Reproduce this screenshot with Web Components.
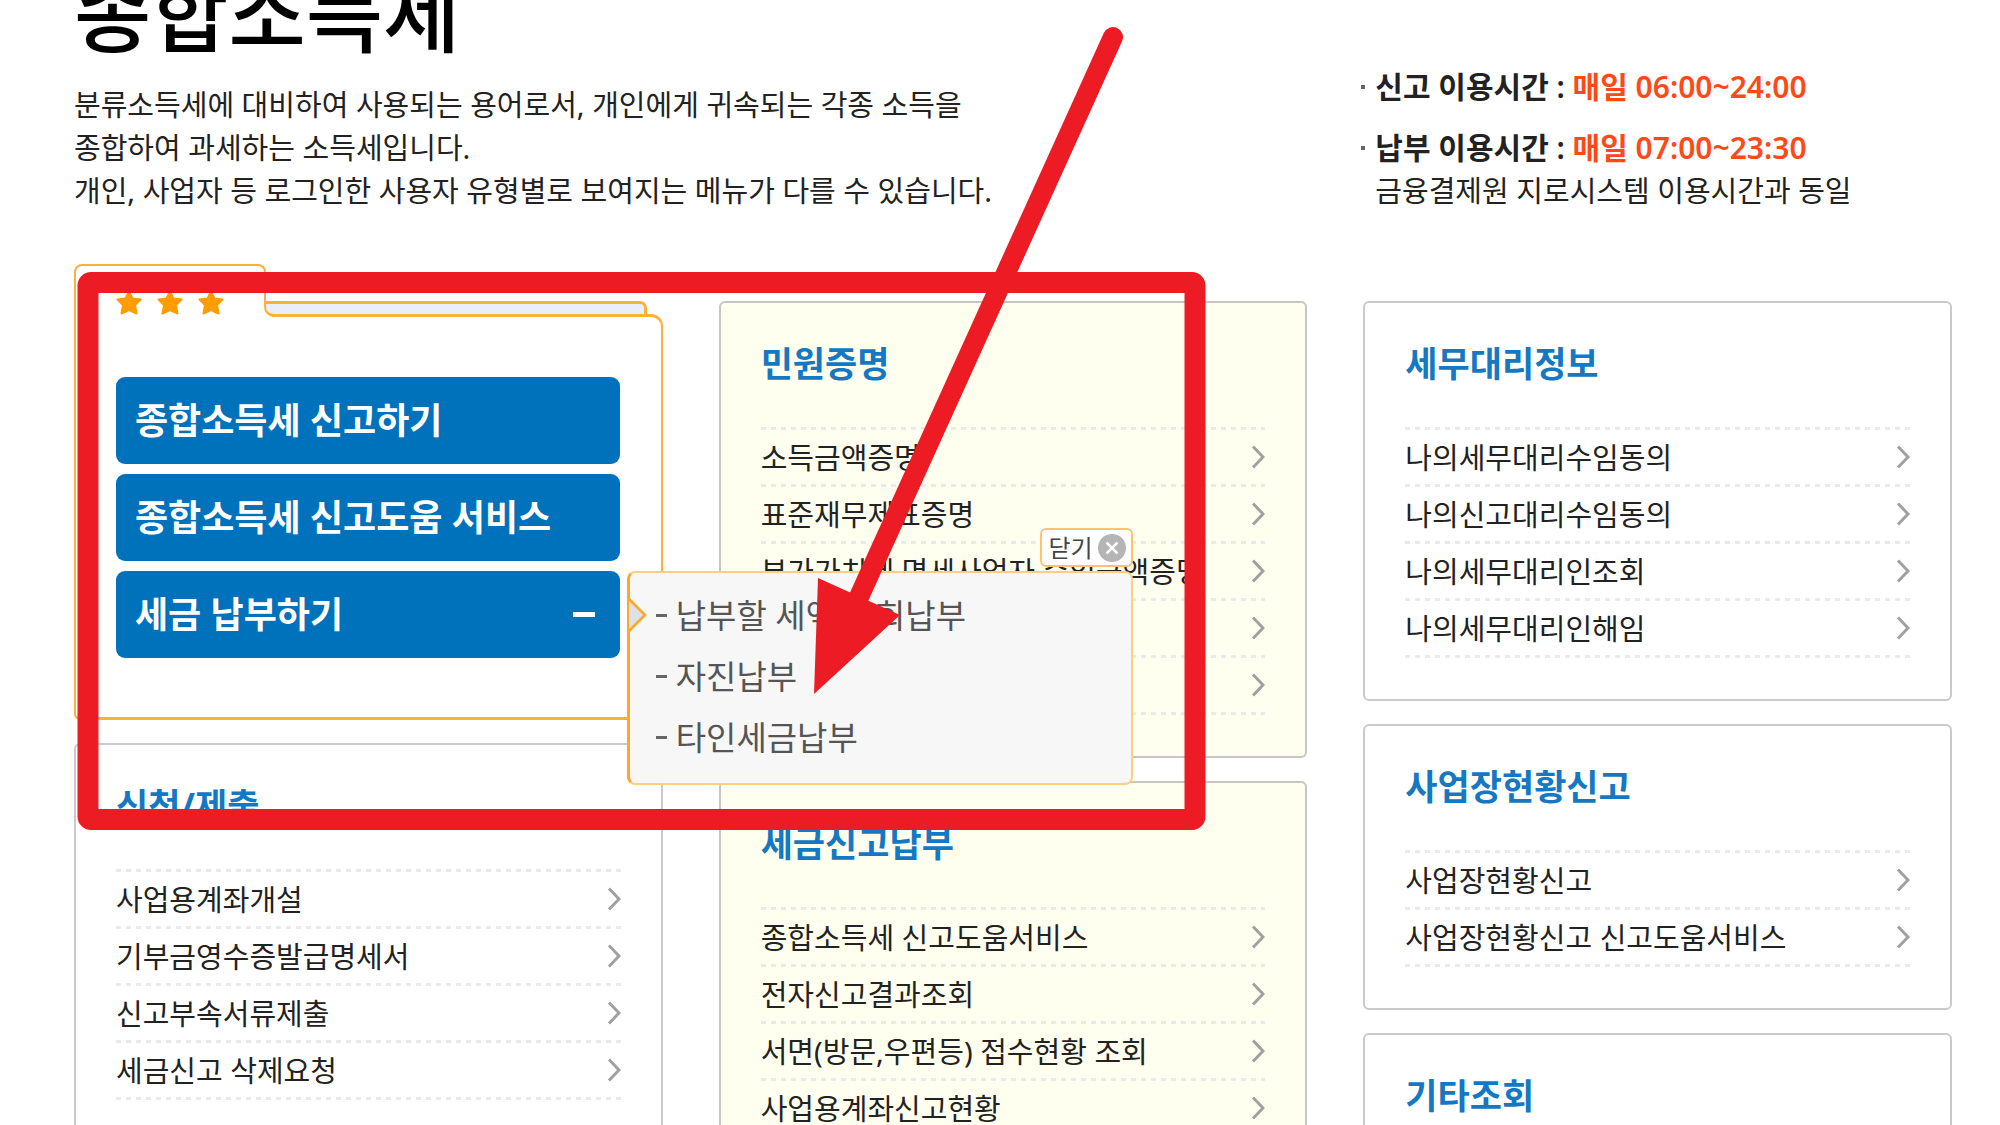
<!DOCTYPE html>
<html lang="ko">
<head>
<meta charset="utf-8">
<title>종합소득세</title>
<style>
  body { margin: 0; height: 100vh; overflow: hidden; background: #fff; color: #222;
    font-family: "Noto Sans", "Noto Sans CJK KR", sans-serif; font-size: 29px; line-height: 43px; }
</style>
</head>
<body>
<tax-page></tax-page>
<script>
const define = (name, html) => {
  const t = document.createElement('template');
  t.innerHTML = html;
  customElements.define(name, class extends HTMLElement {
    connectedCallback() {
      if (this.shadowRoot) return;
      this.attachShadow({ mode: 'open' }).append(t.content.cloneNode(true));
    }
  });
};

define('page-intro', `
<style>
  :host { display: block; }
  h1 { margin: -28px 0 27px; font-size: 84px; line-height: 84px; font-weight: 500; color: #000; }
  p { margin: 0; }
</style>
<h1><slot name="title"></slot></h1>
<p><slot></slot></p>`);

define('service-hours', `
<style>
  :host { display: block; padding-top: 65px; }
  ul { list-style: none; margin: 0; padding: 0; display: flex; flex-direction: column; gap: 18px; }
  li { display: flex; gap: 10px; align-items: flex-start; }
  li::before { content: ""; flex: none; width: 4px; height: 4px; margin-top: 20px; background: #666; }
  b { display: block; font-weight: 600; font-size: 30px; }
  em { font-style: normal; color: #ff4a17; }
  small { display: block; font-size: inherit; }
</style>
<ul>
  <li><div><b>신고 이용시간 : <em>매일 06:00~24:00</em></b></div></li>
  <li><div><b>납부 이용시간 : <em>매일 07:00~23:30</em></b><small>금융결제원 지로시스템 이용시간과 동일</small></div></li>
</ul>`);

define('menu-card', `
<style>
  :host { display: block; box-sizing: border-box; border: 2px solid #cacaca; border-radius: 6px; padding: 38px 40px 41px; background: #fff; }
  :host([tone="cream"]) { background: #fffff0; border-color: #c6c6c0; }
  h2 { margin: 0; font-size: 35px; line-height: 46px; font-weight: 700; color: #1478c2; }
  ul { list-style: none; margin: 40px 0 0; padding: 0; }
  ul::before { content: ""; display: block; height: 3px; background: repeating-linear-gradient(90deg, #eaeaea 0 5px, transparent 5px 10px); }
</style>
<h2><slot name="title"></slot></h2>
<ul><slot></slot></ul>`);

define('menu-row', `
<style>
  :host { display: block; }
  a { display: flex; align-items: center; justify-content: space-between; height: 54px; color: inherit; text-decoration: none; white-space: nowrap; }
  svg { flex: none; width: 14px; height: 24px; }
  i { display: block; height: 3px; background: repeating-linear-gradient(90deg, #eaeaea 0 5px, transparent 5px 10px); }
</style>
<a href="#"><span><slot></slot></span>
<svg viewBox="0 0 14 24" fill="none" stroke="#a0a0a0" stroke-width="3"><path d="M2 1.500 12 12 2 22.500"/></svg></a><i></i>`);

define('action-button', `
<style>
  :host { display: block; }
  button { display: flex; align-items: center; justify-content: space-between; width: 100%; height: 87px; margin: 0; border: 0; border-radius: 9px;
    padding: 0 25px 0 19px; background: #0072bc; color: #fff; font: 700 36px/46px "Noto Sans", "Noto Sans CJK KR", sans-serif; }
  i { display: none; width: 22px; height: 5px; background: #fff; }
  :host([open]) i { display: block; }
</style>
<button type="button"><span><slot></slot></span><i></i></button>`);

define('pay-popup', `
<style>
  :host { display: block; box-sizing: border-box; width: 506px; padding: 12px 26px 15px; border: 2px solid #ffce80; border-left: 3px solid #ffa726; border-radius: 8px; background: #f7f7f8; color: #555; }
  ul { list-style: none; margin: 0; padding: 0; font-size: 33px; line-height: 61px; }
  li { display: flex; align-items: center; gap: 9px; }
  li::before { content: ""; width: 11px; height: 3px; background: #666; }
  a { color: inherit; text-decoration: none; }
  .notch { position: absolute; left: -3px; top: 24px; width: 20px; height: 36px; }
  button { position: absolute; right: -2px; top: -45px; display: flex; align-items: center; gap: 5px; height: 39px; margin: 0; padding: 0 5px 0 6px;
    border: 2px solid #ffc46a; border-radius: 6px; background: #fff; color: #444; font: 24px/30px "Noto Sans", "Noto Sans CJK KR", sans-serif; }
  button svg { width: 28px; height: 28px; }
</style>
<button type="button">닫기<svg viewBox="0 0 28 28"><circle cx="14" cy="14" r="14" fill="#b5b5b5"/><path d="M8.500 8.500 19.500 19.500M19.500 8.500 8.500 19.500" stroke="#fff" stroke-width="2.500"/></svg></button>
<svg class="notch" viewBox="0 0 20 36"><path d="M2 2 18 18 2 34Z" fill="#dde0e6"/><path d="M2 2 18 18 2 34" fill="none" stroke="#ffa726" stroke-width="2.500"/></svg>
<ul>
  <li><a href="#">납부할 세액 조회납부</a></li>
  <li><a href="#">자진납부</a></li>
  <li><a href="#">타인세금납부</a></li>
</ul>`);

define('folder-card', `
<style>
  :host { display: block; --edge: #ffb03b; }
  .tab { position: relative; z-index: 3; box-sizing: border-box; width: 192px; height: 37px; padding: 24px 0 0 40px; display: flex; gap: 15px;
    border: 2px solid var(--edge); border-bottom: 0; border-radius: 8px 8px 0 0; }
  .tab svg { flex: none; width: 26px; height: 25px; fill: #ff9c00; stroke: #ff9c00; stroke-width: 2; stroke-linejoin: round; }
  .neck { display: flex; height: 16px; padding-right: 16px; }
  .fill { position: relative; z-index: 1; box-sizing: border-box; width: 198px; border-left: 2px solid var(--edge); background: #fff; }
  .strip { position: relative; z-index: 2; flex: 1; box-sizing: border-box; margin-left: -8px; border: 3px solid var(--edge); border-left-width: 2px; border-radius: 0 7px 0 10px; background: #e8eefa; }
  .body { box-sizing: border-box; margin-top: -3px; border: 2px solid var(--edge); border-top-width: 3px; border-bottom-width: 3px; border-radius: 0 12px 6px 6px; padding: 60px 41px 59px 40px; display: flex; flex-direction: column; gap: 10px; }
  .anchor { position: relative; }
  pay-popup { position: absolute; z-index: 5; left: calc(100% + 7px); top: 0; }
</style>
<div class="tab">
  <svg viewBox="0 0 26 25"><path d="M13 1.500 16.500 8.500 24.500 9.500 19 15 20.500 23.500 13 20 5.500 23.500 7 15 1.500 9.500 9.500 8.500Z"/></svg>
  <svg viewBox="0 0 26 25"><path d="M13 1.500 16.500 8.500 24.500 9.500 19 15 20.500 23.500 13 20 5.500 23.500 7 15 1.500 9.500 9.500 8.500Z"/></svg>
  <svg viewBox="0 0 26 25"><path d="M13 1.500 16.500 8.500 24.500 9.500 19 15 20.500 23.500 13 20 5.500 23.500 7 15 1.500 9.500 9.500 8.500Z"/></svg>
</div>
<div class="neck"><div class="fill"></div><div class="strip"></div></div>
<div class="body">
  <action-button>종합소득세 신고하기</action-button>
  <action-button>종합소득세 신고도움 서비스</action-button>
  <div class="anchor"><action-button open>세금 납부하기</action-button><pay-popup></pay-popup></div>
</div>`);

define('marker-overlay', `
<style>
  :host { position: absolute; z-index: 10; left: 0; top: 0; pointer-events: none; }
  svg { display: block; width: 1300px; height: 900px; }
</style>
<svg viewBox="0 0 1300 900" fill="none" stroke="#ed1c24" stroke-width="20">
  <rect x="88" y="282.500" width="1107" height="537" rx="3" stroke-width="21"/>
  <path d="M1113 37 859 597" stroke-linecap="round"/>
  <path d="M818 578 814 694 900 615Z" fill="#ed1c24" stroke="none"/>
</svg>`);

define('tax-page', `
<style>
  :host { display: block; position: relative; box-sizing: border-box; padding: 0 48px 0 74px; }
  header, main { display: grid; grid-template-columns: repeat(3, minmax(0, 1fr)); column-gap: 56px; align-items: start; }
  page-intro { grid-column: span 2; }
  service-hours { margin-left: -2px; }
  main { margin-top: 52px; }
  .col { display: flex; flex-direction: column; gap: 23px; padding-top: 37px; }
  .first { padding-top: 0; position: relative; z-index: 2; }
</style>
<header>
  <page-intro><span slot="title">종합소득세</span>분류소득세에 대비하여 사용되는 용어로서, 개인에게 귀속되는 각종 소득을<br>종합하여 과세하는 소득세입니다.<br>개인, 사업자 등 로그인한 사용자 유형별로 보여지는 메뉴가 다를 수 있습니다.</page-intro>
  <service-hours></service-hours>
</header>
<main>
  <div class="col first">
    <folder-card></folder-card>
    <menu-card><span slot="title">신청/제출</span>
      <menu-row>사업용계좌개설</menu-row><menu-row>기부금영수증발급명세서</menu-row><menu-row>신고부속서류제출</menu-row><menu-row>세금신고 삭제요청</menu-row>
    </menu-card>
  </div>
  <div class="col">
    <menu-card tone="cream"><span slot="title">민원증명</span>
      <menu-row>소득금액증명</menu-row><menu-row>표준재무제표증명</menu-row><menu-row>부가가치세 면세사업자 수입금액증명</menu-row><menu-row></menu-row><menu-row></menu-row>
    </menu-card>
    <menu-card tone="cream"><span slot="title">세금신고납부</span>
      <menu-row>종합소득세 신고도움서비스</menu-row><menu-row>전자신고결과조회</menu-row><menu-row>서면(방문,우편등) 접수현황 조회</menu-row><menu-row>사업용계좌신고현황</menu-row>
    </menu-card>
  </div>
  <div class="col">
    <menu-card><span slot="title">세무대리정보</span>
      <menu-row>나의세무대리수임동의</menu-row><menu-row>나의신고대리수임동의</menu-row><menu-row>나의세무대리인조회</menu-row><menu-row>나의세무대리인해임</menu-row>
    </menu-card>
    <menu-card><span slot="title">사업장현황신고</span>
      <menu-row>사업장현황신고</menu-row><menu-row>사업장현황신고 신고도움서비스</menu-row>
    </menu-card>
    <menu-card><span slot="title">기타조회</span></menu-card>
  </div>
</main>
<marker-overlay></marker-overlay>`);
</script>
</body>
</html>
